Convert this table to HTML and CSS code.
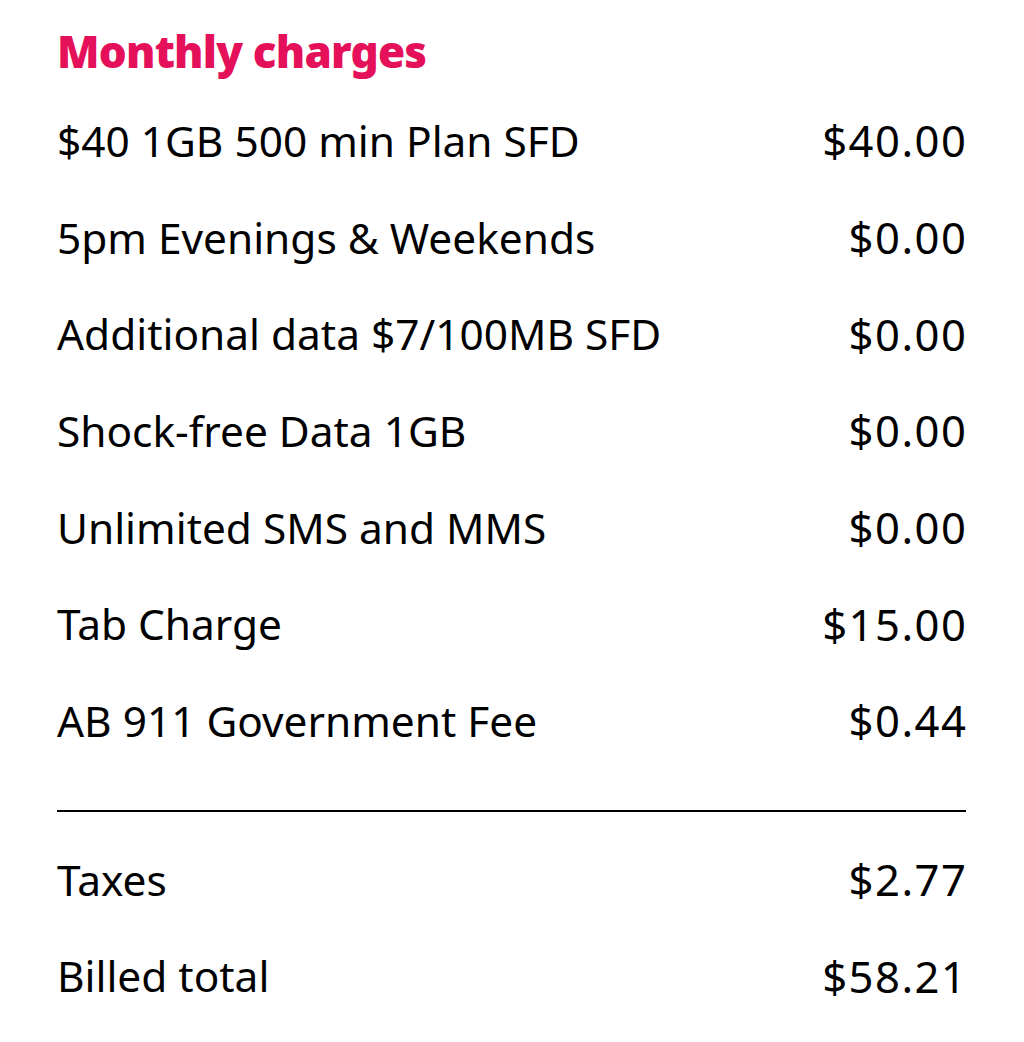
FILE: index.html
```html
<!DOCTYPE html>
<html>
<head>
<meta charset="utf-8">
<link rel="stylesheet" href="styles.css">
</head>
<body>
<div class="card">
  <h2 class="title">Monthly charges</h2>
  <div class="rows items">
    <div class="row"><span class="label">$40 1GB 500 min Plan SFD</span><span class="amount">$40.00</span></div>
    <div class="row"><span class="label">5pm Evenings &amp; Weekends</span><span class="amount">$0.00</span></div>
    <div class="row"><span class="label">Additional data $7/100MB SFD</span><span class="amount">$0.00</span></div>
    <div class="row"><span class="label">Shock-free Data 1GB</span><span class="amount">$0.00</span></div>
    <div class="row"><span class="label">Unlimited SMS and MMS</span><span class="amount">$0.00</span></div>
    <div class="row"><span class="label">Tab Charge</span><span class="amount">$15.00</span></div>
    <div class="row"><span class="label">AB 911 Government Fee</span><span class="amount">$0.44</span></div>
  </div>
  <div class="divider"></div>
  <div class="rows totals">
    <div class="row"><span class="label">Taxes</span><span class="amount">$2.77</span></div>
    <div class="row"><span class="label">Billed total</span><span class="amount">$58.21</span></div>
  </div>
</div>
</body>
</html>
```
FILE: styles.css
```css
html, body {
  margin: 0;
  padding: 0;
  background: #fff;
}
.card {
  padding: 23px 58px 0 57px;
  font-family: "Noto Sans", sans-serif;
  color: #000;
}
.title {
  margin: 0;
  font-size: 44px;
  font-weight: 900;
  color: #e5105a;
  line-height: 56px;
  letter-spacing: -0.8px;
}
.rows {
  display: flex;
  flex-direction: column;
}
.items {
  margin-top: 13px;
}
.row {
  display: flex;
  justify-content: space-between;
  align-items: center;
  height: 96.7px;
  font-size: 42.4px;
}
.amount {
  font-size: 43.6px;
  letter-spacing: 1.5px;
  margin-right: -1.5px;
}
.divider {
  height: 2px;
  background: #000;
  margin: 41px 0 19px;
}
```
